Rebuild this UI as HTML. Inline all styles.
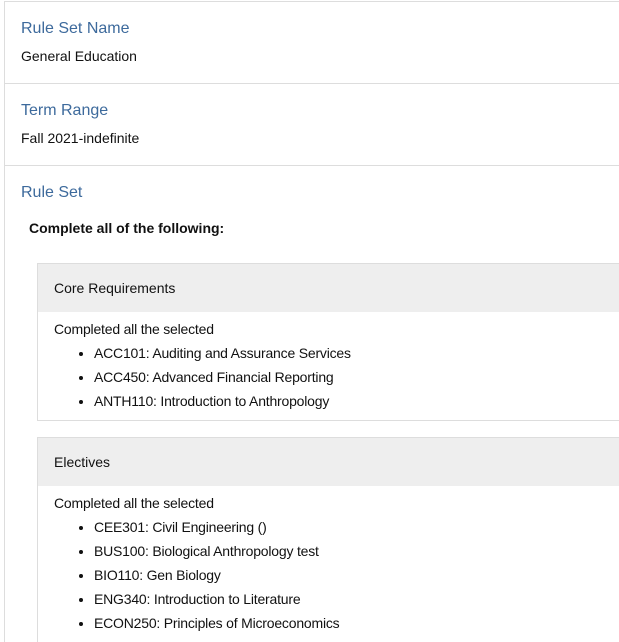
<!DOCTYPE html>
<html style="width:619px;height:642px;overflow:hidden"><head><style>
*{margin:0;padding:0;box-sizing:border-box}
body{width:619px;height:642px;overflow:hidden;background:#fff;font-family:"Liberation Sans",Arial,sans-serif;color:#111;position:relative}
.frame{position:absolute;left:4px;top:1px;width:620px;height:641px;border-left:1px solid #ddd;border-top:1px solid #ddd}
.hr{position:absolute;left:5px;width:614px;height:1px;background:#ddd}
.t{position:absolute;left:21px;font-size:16px;color:#3d6a9c}
.v{position:absolute;left:21px;font-size:14px}
.box{position:absolute;left:37px;width:590px;border:1px solid #ddd;background:#fff}
.box .h{background:#eee;height:48px;padding-left:16px;line-height:48px;font-size:14px}
.box .b{padding:5px 16px 0;font-size:14px;line-height:24px;letter-spacing:-0.2px}
.box ul{padding-left:40px;margin-top:0}
.box li{line-height:24px}
</style></head><body>
<div class="frame"></div>
<div class="t" style="top:20px">Rule Set Name</div>
<div class="v" style="top:48px">General Education</div>
<div class="hr" style="top:83px"></div>
<div class="t" style="top:102px">Term Range</div>
<div class="v" style="top:130px">Fall 2021-indefinite</div>
<div class="hr" style="top:165px"></div>
<div class="t" style="top:184px">Rule Set</div>
<div class="v" style="top:220px;left:29px;font-weight:bold">Complete all of the following:</div>
<div class="box" style="top:263px;height:158px">
<div class="h">Core Requirements</div>
<div class="b">Completed all the selected
<ul><li>ACC101: Auditing and Assurance Services</li><li>ACC450: Advanced Financial Reporting</li><li>ANTH110: Introduction to Anthropology</li></ul></div>
</div>
<div class="box" style="top:437px;height:210px">
<div class="h">Electives</div>
<div class="b">Completed all the selected
<ul><li>CEE301: Civil Engineering ()</li><li>BUS100: Biological Anthropology test</li><li>BIO110: Gen Biology</li><li>ENG340: Introduction to Literature</li><li>ECON250: Principles of Microeconomics</li></ul></div>
</div>
</body></html>
